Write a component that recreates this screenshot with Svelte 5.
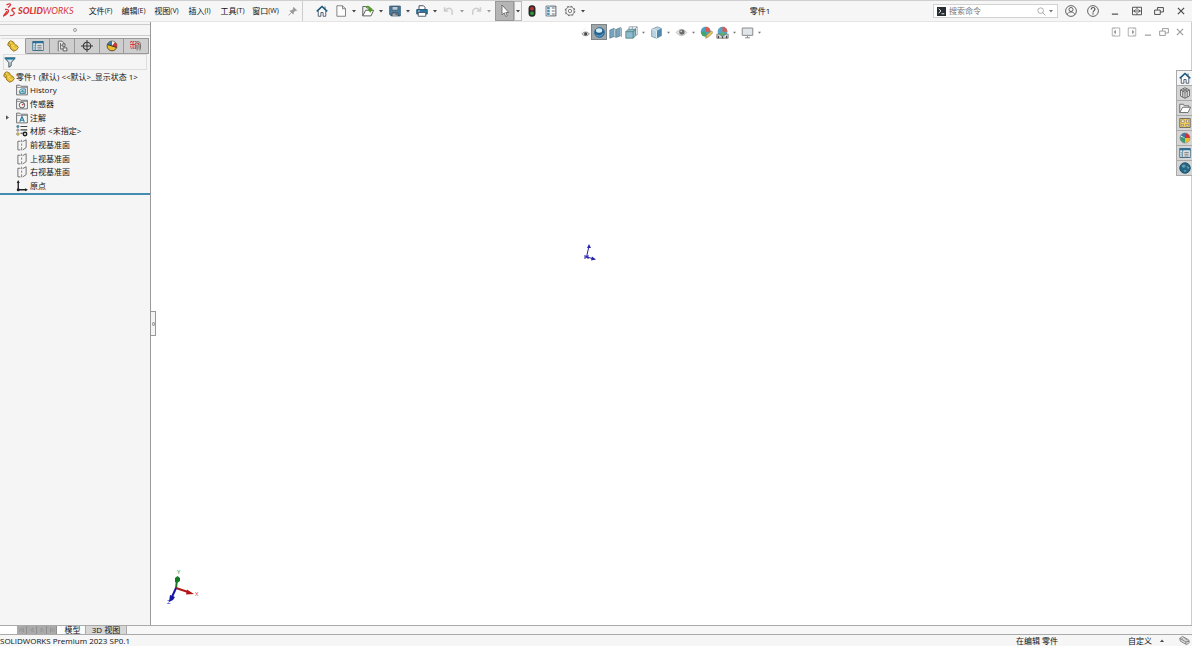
<script>
  const menus = [
    ['文件', '(F)'], ['编辑', '(E)'], ['视图', '(V)'],
    ['插入', '(I)'], ['工具', '(T)'], ['窗口', '(W)']
  ];
  const tools = [
    { icon: 'home', label: '主页' },
    { icon: 'page', label: '新建', more: true },
    { icon: 'open', label: '打开', more: true },
    { icon: 'save', label: '保存', more: true },
    { icon: 'print', label: '打印', more: true },
    { icon: 'undo', label: '撤销', more: true, off: true },
    { icon: 'redo', label: '重做', more: true, off: true },
    { icon: 'cursor', label: '选择', more: true, on: true },
    { icon: 'traffic', label: '重建模型' },
    { icon: 'options', label: '文件属性' },
    { icon: 'gear', label: '选项', more: true }
  ];
  const windowButtons = [
    ['user', '登录'], ['help', '帮助'], ['min', '最小化'],
    ['span', '扩展'], ['restore', '还原'], ['close', '关闭']
  ];
  const docButtons = [
    ['dockLeft', '左侧停靠'], ['dockRight', '右侧停靠'], ['min', '最小化文档'],
    ['restore', '还原文档'], ['close', '关闭文档']
  ];
  const viewTools = [
    { icon: 'smallEye', label: '视图设定' },
    { icon: 'sphere', label: '整屏显示', on: true },
    { icon: 'section', label: '剖面视图' },
    { icon: 'orient', label: '视图定向', more: true },
    { icon: 'cube', label: '显示样式', more: true },
    { icon: 'eye', label: '隐藏项目', more: true },
    { icon: 'paint', label: '编辑外观' },
    { icon: 'scene', label: '应用布景', more: true },
    { icon: 'monitor', label: '视图设置', more: true }
  ];
  const panelTabs = [
    ['part', '设计树'], ['table', '属性'], ['config', '配置'],
    ['target', '尺寸专家'], ['ball', '外观'], ['cam', '加工']
  ];
  const tree = [
    { icon: 'part', text: '零件1 (默认) <<默认>_显示状态 1>', root: true },
    { icon: 'history', text: 'History' },
    { icon: 'sensor', text: '传感器' },
    { icon: 'note', text: '注解', open: true },
    { icon: 'material', text: '材质 <未指定>' },
    { icon: 'plane', text: '前视基准面' },
    { icon: 'plane', text: '上视基准面' },
    { icon: 'plane', text: '右视基准面' },
    { icon: 'origin', text: '原点' }
  ];
  const taskTabs = [
    ['home', '资源'], ['library', '设计库'], ['folder', '文件探索器'], ['palette', '视图调色板'],
    ['ball', '外观与布景'], ['table', '自定义属性'], ['globe', '论坛']
  ];
  const sheetNav = [
    ['第一', 'M4 4v8M11 4L6 8l5 4z'], ['上一', 'M10 4L5 8l5 4z'],
    ['下一', 'M6 4l5 4-5 4z'], ['最后', 'M12 4v8M5 4l5 4-5 4z']
  ];
</script>

{#snippet glyph(name)}
  <svg class="glyph" viewBox="0 0 16 16" fill="none" stroke="#555" stroke-width="1.2" aria-hidden="true">
    {#if name === 'home'}
      <path d="M3 8v7h3.500v-5h3v5H13V8" fill="#fff" stroke="#456" /><path d="M1 8.500L8 2l7 6.500" stroke="#17557a" stroke-width="2" /><path d="M12 2v4" stroke="#456" />
    {:else if name === 'page'}
      <path d="M2.500 1h7.500l4 4v10H2.500z" fill="#fdfdfd" stroke="#777" /><path d="M10 1v4h4" stroke="#777" />
    {:else if name === 'open'}
      <path d="M1 14.500V2h4l1.500 2H12v3" fill="#eee" /><path d="M1 14.500L5 7h10.500L12 14.500z" fill="#fff" /><path d="M5 2.500c4-1 6 0 6 5M8.500 5L11 8.500 13.500 5" stroke="#4a9e20" stroke-width="2" />
    {:else if name === 'save'}
      <path d="M1 1.500h14v13H3l-2-2z" fill="#4a82a8" stroke="#24506f" /><path d="M4 2h8v5H4z" fill="#b9cbd8" stroke="#456" /><path d="M4 14.500v-4h8v4" fill="#aaa" stroke="#345" /><path d="M9.500 11.500v2" stroke="#234" />
    {:else if name === 'print'}
      <path d="M4 6V1h6l2 2v3" fill="#fff" stroke="#345" /><path d="M1 6h14v6H1z" fill="#2f749c" stroke="#1c5273" /><path d="M3 10h10v5H3z" fill="#fff" stroke="#456" /><path d="M3 8h2" stroke="#fff" />
    {:else if name === 'undo'}
      <path d="M2 3v5h5M2.500 8C7 2 14 4 12 13" stroke="#cdcdcd" stroke-width="2" />
    {:else if name === 'redo'}
      <path d="M14 3v5H9M13.500 8C9 2 2 4 4 13" stroke="#cdcdcd" stroke-width="2" />
    {:else if name === 'cursor'}
      <path d="M4 0v13l3-2.500L9 15.500l2-1-2-4.500h4z" fill="#fff" stroke="#555" stroke-width="1" />
    {:else if name === 'traffic'}
      <rect x="4" y="1" width="8" height="14" rx="3" fill="#2a2a2a" stroke="#222" /><circle cx="8" cy="4.800" r="2.500" fill="#b33" stroke="none" /><circle cx="8" cy="11" r="2.500" fill="#289a36" stroke="none" />
    {:else if name === 'options'}
      <path d="M1.500 1.500h13v13h-13z" fill="#fff" stroke="#456" /><path d="M2 2h5v12H2z" fill="#c6d6df" stroke="none" /><path d="M3 4h3M3 8h3M3 12h3" stroke="#267a9d" stroke-width="2" /><path d="M9 4h4M9 8h4M9 12h4" stroke="#555" />
    {:else if name === 'gear'}
      <circle cx="8" cy="8" r="5.400" stroke="#777" stroke-width="1.100" /><circle cx="8" cy="8" r="6.400" stroke="#777" stroke-width="1.400" stroke-dasharray="2.600 2.430" /><circle cx="8" cy="8" r="2.200" stroke="#777" />
    {:else if name === 'pin'}
      <path d="M9 2l5 5-3 .5-2.500 3V13L3 7.500h2.500l3-2.500z" fill="#999" stroke="#888" stroke-width=".8" /><path d="M6 10l-5 5" stroke="#888" />
    {:else if name === 'command'}
      <path d="M0 0h16v16H0z" fill="#282c33" stroke="none" /><path d="M3 3l4 4-4 4M8 12h5" stroke="#fff" stroke-width="1.600" />
    {:else if name === 'search'}
      <circle cx="6.500" cy="6.500" r="5" stroke="#888" /><path d="M10 10l5 5" stroke="#888" />
    {:else if name === 'user'}
      <circle cx="8" cy="8" r="7.200" /><circle cx="8" cy="6" r="2.700" /><path d="M3 13c1-5 9-5 10 0" />
    {:else if name === 'help'}
      <circle cx="8" cy="8" r="7.200" /><path d="M5.500 6c0-3.500 5-3.500 5-.5C10.500 7.500 8 7.500 8 10M8 11v1.800" stroke-width="1.600" />
    {:else if name === 'min'}
      <path d="M3 13h10" stroke="currentColor" stroke-width="1.800" />
    {:else if name === 'span'}
      <path d="M.8 2h14.400v12H.8zM8 2v4M8 10v4M2 8h12M5.500 5.500L3 8l2.500 2.500M10.500 5.500L13 8l-2.500 2.500" stroke="currentColor" stroke-width="1.400" />
    {:else if name === 'restore'}
      <path d="M1 6.500h9v7H1zM5.500 6V2.500H15v7h-4.500" stroke="currentColor" stroke-width="1.500" />
    {:else if name === 'close'}
      <path d="M3 3l10 10M13 3L3 13" stroke="currentColor" stroke-width="1.800" />
    {:else if name === 'dockLeft'}
      <path d="M2 1.500h12v13H2zM5 1.500v2M5 12v2" stroke="currentColor" /><path d="M8 4.500v7L4 8z" fill="currentColor" stroke="none" />
    {:else if name === 'dockRight'}
      <path d="M2 1.500h12v13H2zM11 1.500v2M11 12v2" stroke="currentColor" /><path d="M8 4.500v7L12 8z" fill="currentColor" stroke="none" />
    {:else if name === 'smallEye'}
      <path d="M3 11c3-4 9-4 12 0-3 4-9 4-12 0z" fill="#ddd" stroke="#777" /><circle cx="9" cy="11" r="2.500" fill="#444" stroke="none" /><path d="M1 9L10 1" stroke="#ddd" stroke-width=".8" />
    {:else if name === 'eye'}
      <path d="M1.500 8c4-5 9-5 13 0-4 5-9 5-13 0z" fill="#e4e4e4" stroke="#aaa" stroke-width=".9" /><circle cx="8.500" cy="7.500" r="3.300" fill="#6d6d6d" stroke="none" /><circle cx="7.500" cy="6.500" r="1" fill="#eee" stroke="none" />
    {:else if name === 'sphere'}
      <circle cx="8" cy="8" r="6" fill="#24638f" stroke="#2e6f99" /><ellipse cx="7.500" cy="5.500" rx="3.800" ry="2.700" fill="#d5ecf6" stroke="none" /><path d="M4 11c3 2.500 7 1.500 8.500-2" stroke="#79b6d4" />
    {:else if name === 'section'}
      <path d="M1 5l5-2v10l-5 2zM9 4l5-2v10l-5 2z" fill="#78a5bd" stroke="#4c738a" stroke-width=".8" /><path d="M6 3l2 1v10l-2-1M14 2l1.500 1v10L14 12" fill="#b7cbd6" stroke="#688" stroke-width=".8" />
    {:else if name === 'orient'}
      <path d="M1 7h9v8H1zM1 7l3-3h9l-3 3M10 7l3-3v8l-3 3" fill="#8fbccd" stroke="#477" stroke-width=".9" /><path d="M5 4V1h10v10h-2M9 1v3M12 4l3-3" stroke="#789" stroke-width=".9" />
    {:else if name === 'cube'}
      <path d="M2 4l7-3 5 2v9l-6 3-6-2z" fill="#b9d3e3" stroke="#6a8292" stroke-width=".8" /><path d="M8 6l6-3v9l-6 3z" fill="#4f88ab" stroke="none" /><path d="M2 4l6 2v9" stroke="#dcecf4" />
    {:else if name === 'ball'}
      <circle cx="8" cy="8" r="6.500" fill="#fff" stroke="#555" stroke-width=".9" /><path d="M8 8L2.500 4.500A6.500 6.500 0 018 1.500z" fill="#4274a9" stroke="none" /><path d="M8 8V1.500A6.500 6.500 0 0114.500 8z" fill="#cf3334" stroke="none" /><path d="M8 8h6.500A6.500 6.500 0 018 14.500z" fill="#eebb29" stroke="none" /><path d="M8 8v6.500A6.500 6.500 0 012 6z" fill="#3b9a77" stroke="none" />
    {:else if name === 'ballDark'}
      <circle cx="8" cy="8" r="6.500" fill="#eebb29" stroke="#444" /><path d="M8 8L2 6a6.500 6.500 0 016-4.500z" fill="#3a78b4" stroke="none" /><path d="M8 8V1.500A6.500 6.500 0 0112 3z" fill="#eee" stroke="none" /><path d="M8 8l4-5a6.500 6.500 0 012 7z" fill="#cf3334" stroke="none" /><path d="M2 6l6 2 6 2" stroke="#333" />
    {:else if name === 'paint'}
      <circle cx="7" cy="7" r="6" fill="#4b9fc6" stroke="none" /><path d="M7 7V1A6 6 0 0113 7z" fill="#db5a52" stroke="none" /><path d="M7 7H1a6 6 0 006 6z" fill="#41a564" stroke="none" /><path d="M7 15l1-4 6-5 2 2-5 5z" fill="#eac45c" stroke="#8a7743" stroke-width=".8" />
    {:else if name === 'scene'}
      <circle cx="8" cy="7" r="6" fill="#58a3c2" stroke="none" /><path d="M8 7V1a6 6 0 016 6z" fill="#d85b52" stroke="none" /><path d="M3 11l5-4 5 5z" fill="#5bb069" stroke="none" /><path d="M1 10h3l4 3 4-3h3v5H1z" fill="#ddd" stroke="#555" stroke-width=".8" /><path d="M3 12v3M8 13v2M13 12v3" stroke="#444" stroke-width="1.600" />
    {:else if name === 'monitor'}
      <path d="M1.500 2.500h13v9h-13z" fill="#e1e7e9" stroke="#888" /><path d="M8 12v2M5 14.500h6" stroke="#888" />
    {:else if name === 'part'}
      <path d="M2 3l3-2 4 2 1 3 3 1 2 3-2 3-4 2-4-3-1-3-3-2z" fill="#e7bd35" stroke="#8f6b17" /><path d="M5 2v4l3 2 2-2M7 9l4 3 3-2" stroke="#fbe26b" /><path d="M2 3l3 3-1 3" stroke="#a8811b" />
    {:else if name === 'table'}
      <path d="M1 2h14v12H1z" fill="#fff" stroke="#356581" /><path d="M1 3h14" stroke="#2b6f94" stroke-width="3" /><path d="M5 3v11" stroke="#356581" /><path d="M2 7h2M2 9.500h2M2 12h2" stroke="#3b86a7" /><path d="M7 7h6M7 9.500h6M7 12h6" stroke="#555" />
    {:else if name === 'config'}
      <path d="M3 15V1.500h5l3 3V7" fill="#e4e4e4" stroke="#666" /><path d="M6 4v8h3M6 7h3" stroke="#666" /><path d="M9 5h3v3.500H9zM9.500 10.500h5v4h-5z" fill="#eee" stroke="#555" />
    {:else if name === 'target'}
      <circle cx="8" cy="8" r="5" stroke="#333" stroke-width="1.400" /><path d="M8 0v16M0 8h16" stroke="#333" stroke-width="1.300" />
    {:else if name === 'cam'}
      <path d="M1 2h7v9H1z" fill="#ecc" stroke="#c33" stroke-dasharray="2 1" /><path d="M4 2v9M1 6h6" stroke="#c33" /><path d="M7 12V6c0-5 7-5 7 0v5l-1 3M9.500 14V6.500M12 5v7" stroke="#666" /><path d="M10 4l2 2" stroke="#c33" stroke-width="1.500" />
    {:else if name === 'filter'}
      <path d="M1 2.500h14L9.500 9v4l-3 2V9z" fill="#d5e2e8" stroke="#345" /><path d="M2 3.500h12" stroke="#16789d" stroke-width="2.500" />
    {:else if name === 'history' || name === 'sensor' || name === 'note'}
      <path d="M.8 14.500V1.500H5L6.500 3H15.200v11.500z" fill="#f4f4f4" stroke="#666" /><path d="M1 4.500h14" stroke="#888" />
      {#if name === 'history'}<path d="M5 12.500c-1.500-3 0-6 3.500-6h4v6z" fill="#c8dde2" stroke="#26819c" /><path d="M9 8v2.500h2.500M5 12l4-4" stroke="#26819c" />
      {:else if name === 'sensor'}<circle cx="8" cy="9.500" r="3.700" stroke="#555" /><path d="M8 9.500l2.500-2" stroke="#c33" stroke-width="1.500" />
      {:else}<path d="M5 13l3-7 3 7M6 11h4" stroke="#287f9d" stroke-width="1.500" />{/if}
    {:else if name === 'material'}
      <path d="M6 2h9M6 6.500h9M6 11h3" stroke="#444" stroke-width="1.500" /><circle cx="2.500" cy="2" r="1.600" fill="#4ba0b7" stroke="#467" stroke-width=".7" /><circle cx="2.500" cy="6.800" r="1.600" fill="#aac" stroke="#666" stroke-width=".7" /><circle cx="2.500" cy="12" r="1.800" fill="#ebcb3e" stroke="#765" stroke-width=".7" /><circle cx="12" cy="12" r="2.300" stroke="#222" stroke-width="2" />
    {:else if name === 'plane'}
      <path d="M6 3H2.500v11.500H6M9 3.500l4.500-2.500v10.500L9 14.500" stroke="#666" /><path d="M7.500 1v3M7.500 6v3M7.500 11v4" stroke="#777" />
    {:else if name === 'origin'}
      <path d="M3 2v11h11" stroke="#222" stroke-width="1.800" /><path d="M3 0l2 4H1zM16 13l-4-2v4z" fill="#222" stroke="none" /><circle cx="3" cy="13" r="2" fill="#222" stroke="none" />
    {:else if name === 'library'}
      <path d="M2 4l6-3 6 3v8l-6 3-6-3zM2 4l6 3 6-3M8 7v8M5 2.500l6 3v8M5 5.500v8M11 2.500l-6 3" fill="#ddd" stroke="#666" />
    {:else if name === 'folder'}
      <path d="M1 14V3h5l1 2h6v3" fill="#eee" stroke="#666" /><path d="M1 14L5 7h10.500L12 14z" fill="#fff" stroke="#666" />
    {:else if name === 'palette'}
      <path d="M1 2h14v12H1z" fill="#f1ce58" stroke="#666" /><path d="M3 4h4v3H3zM10 4h3v3h-3zM3 10h3v2H3zM9 10h4v2H9z" fill="#fff" stroke="#765" stroke-width=".8" />
    {:else if name === 'globe'}
      <circle cx="8" cy="8" r="7" fill="#236684" stroke="#194d65" /><path d="M3 5l4-2 2 3-3 2zM10 5l4 2-2 3zM6 11h4l-2 3z" fill="#6a9cb0" stroke="none" />
    {:else if name === 'tags'}
      <path d="M1 5l4-3 9 5 1 4-4 3-9-5z" fill="#ddd" stroke="#777" /><path d="M1 5l9 5 5-1M4 5l2 1M10 10v3M7 3l5 5" stroke="#777" />
    {/if}
  </svg>
{/snippet}

{#snippet caret()}
  <svg class="caret" viewBox="0 0 4 4" aria-hidden="true"><path d="M0 1h4L2 3.500z" /></svg>
{/snippet}

<div class="app">
  <header>
    <div class="logo">
      <svg viewBox="0 0 14 16" fill="none" stroke="#d8363b" stroke-width="1.300" aria-hidden="true">
        <path d="M3.500 1.800C7.500 0 9.500 1 5 4.500M2 6.500c5.500-1 4 4-1.500 6.500L4 8M12.500 5.500C9 4.500 8 7 10 8.500c2.500 1.500 1 4.500-3 4" />
      </svg>
      <span><b>SOLID</b>WORKS</span>
    </div>
    <nav>
      {#each menus as [name, key]}
        <button>{name}<small>{key}</small></button>
      {/each}
      <button class="pin" aria-label="固定">{@render glyph('pin')}</button>
    </nav>
    <div class="tools">
      {#each tools as t}
        <div class="tool" class:on={t.on} class:off={t.off}>
          <button class="main" aria-label={t.label} disabled={t.off}>{@render glyph(t.icon)}</button>
          {#if t.more}<button class="more" aria-label="{t.label}选项">{@render caret()}</button>{/if}
        </div>
      {/each}
    </div>
    <h1>零件1</h1>
    <div class="search">
      {@render glyph('command')}
      <input type="search" aria-label="搜索命令" placeholder="搜索命令" />
      <button aria-label="搜索">{@render glyph('search')}</button>
      <button class="more" aria-label="搜索范围">{@render caret()}</button>
    </div>
    <div class="window">
      {#each windowButtons as [icon, label]}
        <button class={icon} aria-label={label}>{@render glyph(icon)}</button>
      {/each}
    </div>
  </header>

  <main>
    <aside>
      <div class="grip"><i></i></div>
      <div class="tabs">
        {#each panelTabs as [icon, label], i}
          <button class:active={i === 0} aria-label={label}>{@render glyph(icon === 'ball' ? 'ballDark' : icon)}</button>
        {/each}
      </div>
      <label class="filter">{@render glyph('filter')}<input aria-label="过滤" /></label>
      <ul>
        {#each tree as item}
          <li class:root={item.root}>
            {#if !item.root}<span class="arrow">{#if item.open}<svg viewBox="0 0 4 6" aria-hidden="true"><path d="M0 0l4 3-4 3z" /></svg>{/if}</span>{/if}
            {@render glyph(item.icon)}<span>{item.text}</span>
          </li>
        {/each}
      </ul>
    </aside>

    <section>
      <div class="topbar">
        <div class="views">
          {#each viewTools as t}
            <button class:on={t.on} class={t.icon} aria-label={t.label}>{@render glyph(t.icon)}</button>
            {#if t.more}<button class="more" aria-label="{t.label}选项">{@render caret()}</button>{/if}
          {/each}
        </div>
        <div class="doc">
          {#each docButtons as [icon, label]}
            <button aria-label={label}>{@render glyph(icon)}</button>
          {/each}
        </div>
      </div>
      <button class="splitter" aria-label="折叠面板"><i></i></button>
      <svg class="marker" viewBox="0 0 14 20" fill="none" stroke="#2925a8" aria-hidden="true">
        <path d="M3.500 14L6 3M3.500 14l8 2M1.500 12l4 4M5.500 12l-4 4M1 14h5" />
        <path d="M6 1l2 4H4zM13 16.500l-5 1 1-4z" fill="#2925a8" stroke="none" />
      </svg>
      <svg class="triad" viewBox="0 0 36 38" aria-hidden="true">
        <path d="M10 19l1-8" stroke="#177b28" stroke-width="2" /><path d="M9 13V9l2.500-2L14 9v3l-3 2z" fill="#137923" />
        <path d="M10 19l12 4" stroke="#b31717" stroke-width="2" /><path d="M21 20.500l7 4.500-8 .5z" fill="#b31717" />
        <path d="M10 19L6 28" stroke="#1515a8" stroke-width="2" /><path d="M4 26l5 2-2 3-4 2z" fill="#1515a8" />
        <text x="11" y="5" fill="#178a50">Y</text><text x="29" y="27" fill="#d33">X</text><text x="1" y="35" fill="#1515c8">Z</text>
      </svg>
      <div class="tasks">
        {#each taskTabs as [icon, label]}
          <button aria-label={label}>{@render glyph(icon)}</button>
        {/each}
      </div>
    </section>
  </main>

  <div class="sheets">
    <div class="steps">
      {#each sheetNav as [label, d]}
        <button aria-label={label}><svg viewBox="0 0 16 16" fill="none" stroke="#858585" aria-hidden="true"><path {d} /></svg></button>
      {/each}
    </div>
    <button class="sheet current">模型</button>
    <button class="sheet">3D 视图</button>
  </div>

  <footer>
    <span class="version">SOLIDWORKS Premium 2023 SP0.1</span>
    <span class="mode">在编辑 零件</span>
    <button class="custom">自定义 <svg class="caret" viewBox="0 0 4 4" aria-hidden="true"><path d="M0 3h4L2 .5z" /></svg></button>
    <button aria-label="标签">{@render glyph('tags')}</button>
  </footer>
</div>

<style>
  :global(body) { margin: 0; background: #fff; }
  .app {
    display: grid;
    grid-template-rows: 22px 1fr 10px 11px;
    min-height: 100vh;
    color: #111;
    font: 8px/12px "Open Sans", "Noto Sans CJK SC", sans-serif;
  }
  * { box-sizing: border-box; }
  button, input {
    margin: 0; padding: 0; border: 0; background: none;
    font: inherit; color: inherit; min-width: 0;
  }
  button { display: flex; align-items: center; justify-content: center; }
  .glyph { display: block; width: 12px; height: 12px; flex: none; }
  .caret { width: 4px; height: 4px; fill: #444; flex: none; }
  .more { width: 8px; }

  header {
    display: flex; align-items: stretch;
    background: #f6f6f6;
    border-top: 1px solid #cfcfcf; border-bottom: 1px solid #e4e4e4;
  }
  .logo {
    display: flex; align-items: center; gap: 1px;
    width: 84px; padding-left: 3px;
    color: #d8363b; font: italic 9px/12px Lato, "Open Sans", sans-serif;
  }
  .logo svg { width: 14px; height: 16px; }
  .logo b { font-weight: 900; }
  nav { display: flex; width: 219px; border-right: 1px solid #ccc; }
  nav button { width: 33px; white-space: nowrap; }
  nav small { font-size: 7px; }
  nav .pin { width: 14px; margin-left: 4px; }
  .pin .glyph { width: 10px; height: 10px; }
  .tools { display: flex; padding-left: 9px; }
  .tool { display: flex; }
  .tool .main { width: 19px; }
  .tool.off .caret { fill: #999; }
  .tool.on { margin-left: 2px; }
  .tool.on .main { background: #b5b5b5; border: 1px solid #999; }
  .tool.on .more { border: 1px solid #bbb; }
  h1 { flex: 1; margin: 0; align-self: center; text-align: center; font: inherit; }
  .search {
    display: flex; align-items: center; align-self: center;
    width: 125px; height: 14px; padding: 0 2px 0 3px;
    background: #fff; border: 1px solid #d2d2d2;
  }
  .search .glyph { width: 9px; height: 9px; }
  .search input { flex: 1; padding-left: 3px; outline: 0; }
  .search input::placeholder { color: #777; }
  .search > button { height: 12px; }
  .search button:not(.more) { width: 12px; }
  .search .caret { fill: #777; }
  .window { display: flex; color: #444; padding: 0 0 0 2px; }
  .window button { width: 22px; }
  .window .glyph { width: 10px; height: 10px; }
  .window .user .glyph, .window .help .glyph { width: 12px; height: 12px; }

  main { display: grid; grid-template-columns: 151px 1fr; }
  aside { background: #f5f5f5; border-right: 1px solid #999; padding-top: 2px; }
  .grip {
    display: flex; align-items: center; justify-content: center;
    height: 12px; border: 1px solid #ccc; border-left: 0; border-right: 0;
  }
  i { display: block; width: 4px; height: 4px; border: 1px solid #999; border-radius: 50%; }
  .tabs { display: flex; height: 16px; margin: 2px 1px 0; }
  .tabs button { flex: 1; background: #cecece; border: 1px solid #999; border-left: 0; }
  .tabs .active { background: #f7f7f7; border-top-color: #ddd; border-bottom-color: #f7f7f7; }
  .filter {
    display: flex; align-items: center;
    height: 16px; margin: 0 3px; border: 1px solid #ddd;
  }
  .filter input { flex: 1; height: 12px; outline: 0; }
  ul {
    display: grid; grid-template-rows: repeat(9, 1fr);
    height: 125px; margin: 0; padding: 0;
    border-bottom: 2px solid #448cb2; list-style: none;
  }
  li { display: flex; align-items: center; gap: 2px; white-space: nowrap; padding-left: 2px; }
  li.root { padding-left: 3px; gap: 1px; }
  .arrow { display: flex; align-items: center; width: 12px; padding-left: 4px; }
  .arrow svg { width: 3px; height: 5px; fill: #555; }

  section { position: relative; border-right: 1px solid #ccc; background: #fff; }
  .topbar { display: grid; grid-template-columns: 1fr auto 1fr; padding-top: 2px; }
  .views { grid-column: 2; display: flex; margin-left: 1px; }
  .views button { width: 16px; height: 16px; }
  .views .glyph { width: 13px; height: 13px; }
  .views .more { width: 9px; }
  .views .caret { width: 3px; height: 3px; fill: #777; }
  .views .smallEye { width: 12px; }
  .views .smallEye .glyph { width: 10px; height: 10px; }
  .views .on { background: #a0a7ab; border: 1px solid #7d8589; }
  .doc { display: flex; justify-content: end; color: #999; padding-right: 3px; }
  .doc button { width: 16px; height: 16px; }
  .doc .glyph { width: 10px; height: 10px; }
  .splitter {
    position: absolute; left: 0; top: 48%;
    width: 5px; height: 25px; background: #f5f5f5;
    border: 1px solid #999; border-left: 0;
  }
  .splitter i { width: 3px; height: 4px; }
  .marker { position: absolute; left: 41.500%; top: 36.700%; width: 14px; height: 20px; }
  .triad { position: absolute; left: 15px; bottom: 18px; width: 36px; height: 38px; }
  .triad text { font: 6px "Open Sans", sans-serif; }
  .tasks {
    position: absolute; right: -1px; top: 48px;
    width: 16px; border-left: 1px solid #aaa; border-top: 1px solid #aaa;
  }
  .tasks button { width: 15px; height: 15px; background: #d5d5d5; border-bottom: 1px solid #aaa; }
  .tasks button:first-child { background: #f5f5f5; }

  .sheets {
    display: flex; background: #f7f7f7;
    border-top: 1px solid #aaa; border-bottom: 1px solid #aaa;
    line-height: 8px;
  }
  .steps { display: flex; width: 60px; padding-left: 17px; background: #fff; }
  .steps button { width: 10px; background: #aaa; border-right: 1px solid #909090; }
  .steps svg { width: 8px; height: 8px; }
  .sheet { width: 41px; background: #d6d6d6; border-right: 1px solid #aaa; }
  .sheet.current { width: 26px; background: #fafafa; }

  footer { display: flex; align-items: center; background: #f6f6f6; line-height: 11px; }
  .version { flex: 1; }
  .mode { width: 112px; }
  .custom { gap: 8px; width: 36px; justify-content: start; white-space: nowrap; margin-right: 15px; }
  footer .glyph { width: 11px; height: 11px; margin-right: 2px; }
</style>
